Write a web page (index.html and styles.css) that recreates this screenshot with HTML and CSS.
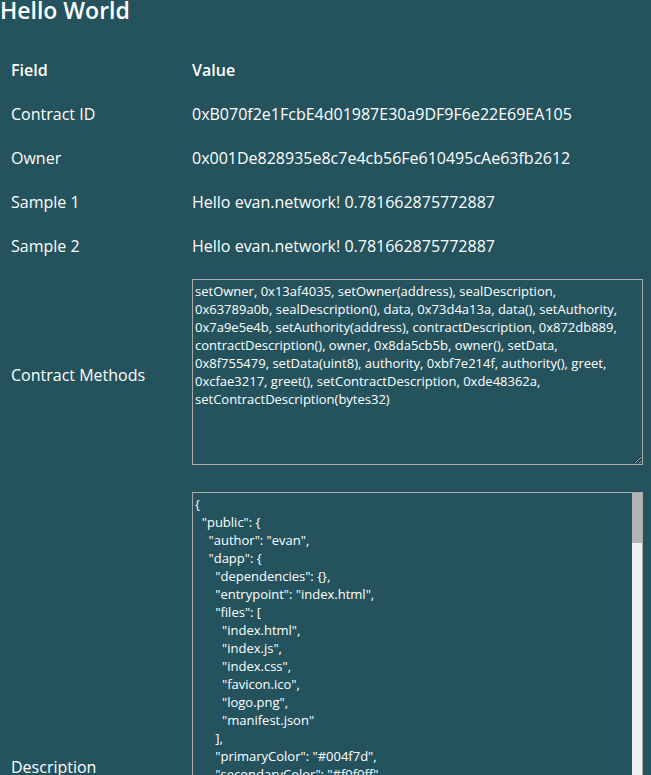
FILE: index.html
```html
<!DOCTYPE html>
<html>
<head>
<meta charset="utf-8">
<title>Hello World</title>
<link rel="stylesheet" href="styles.css">
</head>
<body>
<h1 class="title">Hello World</h1>
<table class="info">
  <thead>
    <tr><th class="label">Field</th><th class="value">Value</th></tr>
  </thead>
  <tbody>
    <tr><td class="label">Contract ID</td><td class="value">0xB070f2e1FcbE4d01987E30a9DF9F6e22E69EA105</td></tr>
    <tr><td class="label">Owner</td><td class="value">0x001De828935e8c7e4cb56Fe610495cAe63fb2612</td></tr>
    <tr><td class="label">Sample 1</td><td class="value">Hello evan.network! 0.781662875772887</td></tr>
    <tr><td class="label">Sample 2</td><td class="value">Hello evan.network! 0.781662875772887</td></tr>
    <tr><td class="label">Contract Methods</td><td class="value"><textarea class="box methods">setOwner, 0x13af4035, setOwner(address), sealDescription, 0x63789a0b, sealDescription(), data, 0x73d4a13a, data(), setAuthority, 0x7a9e5e4b, setAuthority(address), contractDescription, 0x872db889, contractDescription(), owner, 0x8da5cb5b, owner(), setData, 0x8f755479, setData(uint8), authority, 0xbf7e214f, authority(), greet, 0xcfae3217, greet(), setContractDescription, 0xde48362a, setContractDescription(bytes32)</textarea></td></tr>
    <tr><td class="label">Description</td><td class="value"><div class="scrollwrap"><textarea class="box description">{
  "public": {
    "author": "evan",
    "dapp": {
      "dependencies": {},
      "entrypoint": "index.html",
      "files": [
        "index.html",
        "index.js",
        "index.css",
        "favicon.ico",
        "logo.png",
        "manifest.json"
      ],
      "primaryColor": "#004f7d",
      "secondaryColor": "#f0f0ff",
      "standalone": true,
      "type": "dapp"
    },
    "description": "Hello World sample contract",
    "i18n": {
      "description": {
        "de": "Hello World Beispielvertrag",
        "en": "Hello World sample contract"
      },
      "name": {
        "de": "Hello World",
        "en": "Hello World"
      }
    },
    "name": "helloworld",
    "tags": [
      "contract",
      "helloworld",
      "sample"
    ],
    "version": "1.0.0"
  },
  "dbcpVersion": 1
}</textarea><div class="scrollbar"><div class="thumb"></div></div></div></td></tr>
  </tbody>
</table>
</body>
</html>
```

FILE: styles.css
```css
html, body {
  margin: 0;
  padding: 0;
  background: #24535e;
}
body {
  color: #ffffff;
  font-family: "Open Sans", "Liberation Sans", sans-serif;
  font-size: 16px;
}
.title {
  margin: -6px 0 22px 0;
  font-size: 23px;
  font-weight: 600;
  line-height: normal;
}
.info {
  width: 100%;
  border-collapse: collapse;
  border-spacing: 0;
}
.info th, .info td {
  padding: 11px 8px 11px 11px;
  text-align: left;
  vertical-align: middle;
  line-height: 22px;
}
.info th {
  font-weight: 600;
}
.info .label {
  width: 170px;
  padding-right: 0;
}
.box {
  display: block;
  box-sizing: border-box;
  width: 100%;
  margin: 0 0 5px 0;
  padding: 2px 3px 3px 2px;
  border: 1px solid #a9a9a9;
  background: transparent;
  color: #ffffff;
  font-family: "Open Sans", "Liberation Sans", sans-serif;
  font-size: 13px;
  line-height: 18px;
  outline: none;
}
.methods {
  height: 186px;
  padding-right: 12px;
}
.scrollwrap {
  position: relative;
}
.description {
  height: 545px;
  padding-right: 13px;
  overflow: hidden;
  resize: none;
}
.scrollbar {
  position: absolute;
  top: 1px;
  right: 1px;
  bottom: 6px;
  width: 10px;
  background: #f0f0f0;
}
.thumb {
  height: 50px;
  background: #b4b4b4;
}
```
